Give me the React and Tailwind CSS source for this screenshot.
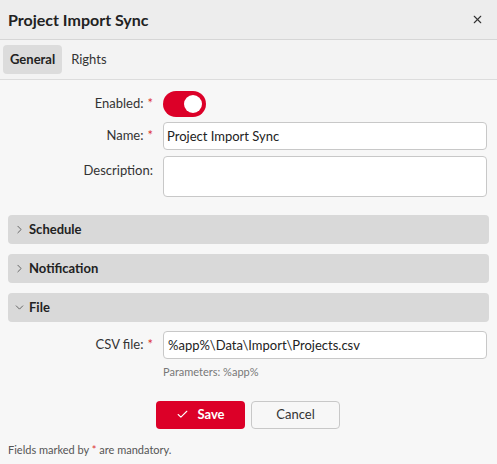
import React, { useState } from 'react';
import { X, ChevronRight, ChevronDown, Check } from 'lucide-react';

function Section({ title, open }) {
  return (
    <div className="mx-2 flex h-[29px] items-center gap-[3px] rounded-[4px] bg-[#d9d9d9] pl-[5px]">
      {open ? (
        <ChevronDown className="h-[13px] w-[13px] text-[#555]" strokeWidth={1.6} />
      ) : (
        <ChevronRight className="h-[13px] w-[13px] text-[#555]" strokeWidth={1.6} />
      )}
      <span className="text-[13px] font-bold text-[#222]">{title}</span>
    </div>
  );
}

function Label({ text, required }) {
  return (
    <div className="flex w-[155px] shrink-0 justify-end pr-[2px] text-[13px] text-[#333]">
      <span>{text}</span>
      {required && <span className="ml-[4px] text-[#d33]">*</span>}
    </div>
  );
}

export default function App() {
  const [enabled, setEnabled] = useState(true);
  const [name, setName] = useState('Project Import Sync');
  const [csv, setCsv] = useState('%app%\\Data\\Import\\Projects.csv');

  return (
    <div className="h-[464px] w-[497px] overflow-hidden bg-[#f7f7f7] font-['Lato','Liberation_Sans',sans-serif] text-[#222]">
      {/* Header */}
      <div className="flex h-[40px] items-center justify-between border-b border-[#d6d6d6] bg-[#ededed] pl-[8px] pr-[13px]">
        <h1 className="text-[16px] font-bold text-[#222]">Project Import Sync</h1>
        <X className="h-[13px] w-[13px] text-[#333]" strokeWidth={2} />
      </div>

      {/* Tabs */}
      <div className="flex h-[40px] items-center gap-[2px] border-b border-[#dcdcdc] bg-[#f3f3f3] px-[3px]">
        <div className="flex h-[29px] items-center rounded-[4px] bg-[#dcdcdc] px-[7px] text-[13px] font-bold">General</div>
        <div className="flex h-[29px] items-center px-[7px] text-[13px] text-[#333]">Rights</div>
      </div>

      {/* Body */}
      <div className="pt-[11px]">
        <div className="flex h-[26px] items-center">
          <Label text="Enabled:" required />
          <button
            onClick={() => setEnabled(!enabled)}
            className="relative ml-[8px] h-[26px] w-[43px] rounded-full bg-[#dc0028]"
          >
            <span className={`absolute top-[4px] h-[18px] w-[18px] rounded-full bg-white ${enabled ? 'left-[21px]' : 'left-[4px]'}`} />
          </button>
        </div>

        <div className="mt-[5px] flex items-center">
          <Label text="Name:" required />
          <input
            value={name}
            onChange={(e) => setName(e.target.value)}
            className="ml-[8px] h-[28px] w-[324px] rounded-[4px] border border-[#c8c8c8] bg-white px-[3px] text-[13px] text-[#222] outline-none"
          />
        </div>

        <div className="mt-[6px] flex items-start">
          <div className="pt-[5px]">
            <Label text="Description:" />
          </div>
          <textarea className="ml-[8px] h-[41px] w-[324px] resize-none rounded-[4px] border border-[#c8c8c8] bg-white px-[3px] text-[13px] outline-none" />
        </div>

        <div className="mt-[18px] flex flex-col gap-[10px]">
          <Section title="Schedule" />
          <Section title="Notification" />
          <Section title="File" open />
        </div>

        <div className="mt-[9px] flex items-center">
          <Label text="CSV file:" required />
          <input
            value={csv}
            onChange={(e) => setCsv(e.target.value)}
            className="ml-[8px] h-[28px] w-[324px] rounded-[4px] border border-[#c8c8c8] bg-white px-[4px] text-[13px] text-[#222] outline-none"
          />
        </div>
        <div className="ml-[163px] mt-[5px] text-[11px] text-[#777]">Parameters: %app%</div>

        <div className="mt-[20px] flex gap-[6px] pl-[156px]">
          <button className="flex h-[28px] w-[89px] items-center justify-center gap-[8px] rounded-[4px] bg-[#dc0028] text-[13px] font-bold text-white">
            <Check className="h-[13px] w-[13px]" strokeWidth={2} />
            Save
          </button>
          <button className="h-[28px] w-[89px] rounded-[4px] border border-[#c8c8c8] bg-[#f7f7f7] text-[13px] text-[#333]">
            Cancel
          </button>
        </div>

        <div className="ml-[8px] mt-[13px] text-[11px] text-[#555]">
          Fields marked by <span className="text-[#d33]">*</span> are mandatory.
        </div>
      </div>
    </div>
  );
}
